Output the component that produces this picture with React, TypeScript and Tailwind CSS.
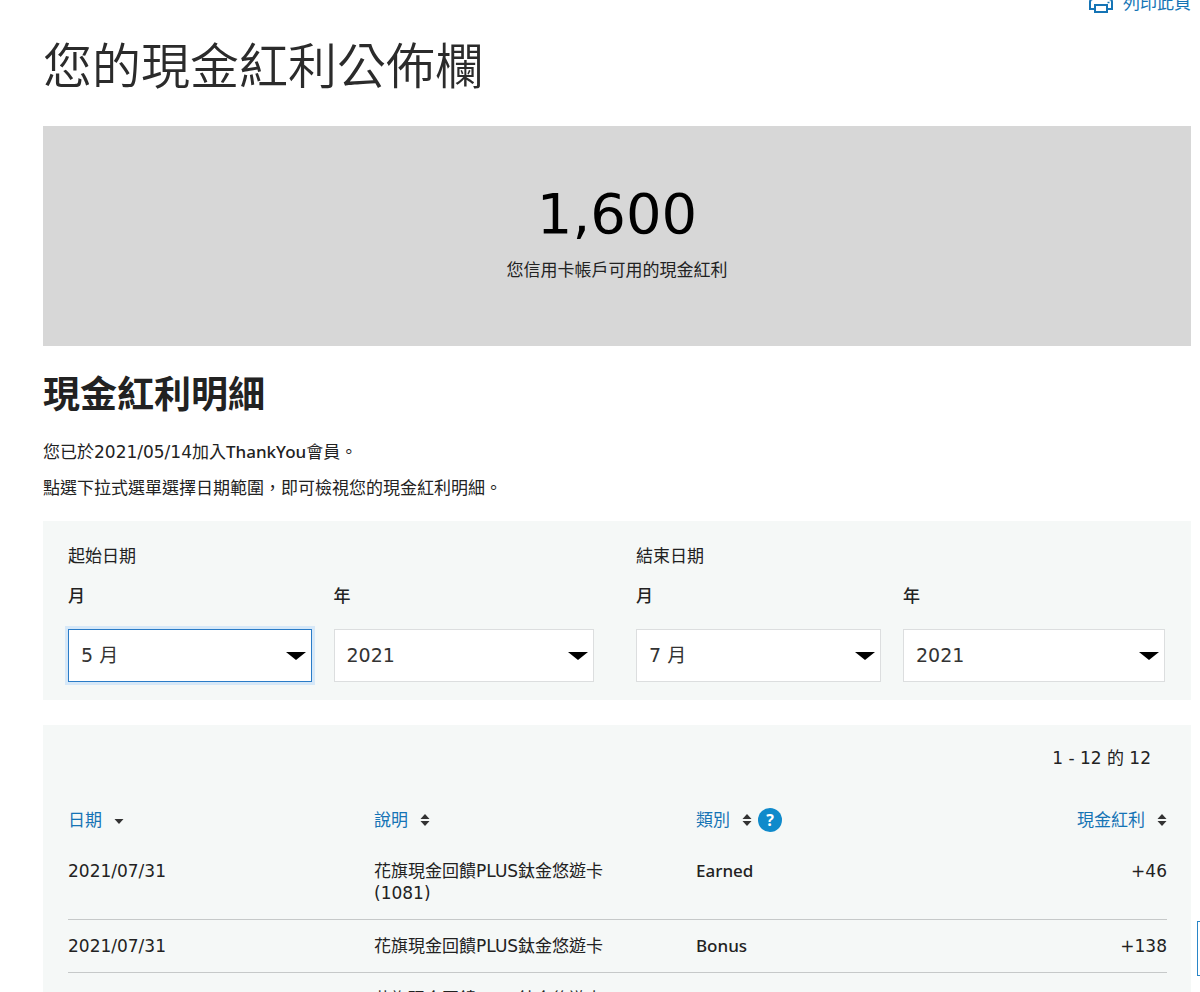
import { ReactNode } from "react";
import clsx from "clsx";

const months = ["1 月", "2 月", "3 月", "4 月", "5 月", "6 月", "7 月", "8 月", "9 月", "10 月", "11 月", "12 月"];
const years = ["2020", "2021"];

const rows = [
  { date: "2021/07/31", name: "花旗現金回饋PLUS鈦金悠遊卡", card: "(1081)", type: "Earned", amount: "+46" },
  { date: "2021/07/31", name: "花旗現金回饋PLUS鈦金悠遊卡", card: "", type: "Bonus", amount: "+138" },
  { date: "2021/07/31", name: "花旗現金回饋PLUS鈦金悠遊卡", card: "", type: "Earned", amount: "+54" },
];

const digits = "font-['DejaVu_Sans','Noto_Sans_CJK_TC',sans-serif]";

const PrintIcon = () => (
  <svg className="h-6 w-6" viewBox="0 0 24 24" fill="none" stroke="currentColor" strokeWidth="2" aria-hidden="true">
    <path d="M6 8V2h12v6" />
    <path d="M6 18H1V11a3 3 0 0 1 3-3h16a3 3 0 0 1 3 3v7h-5" />
    <path d="M6 14h12v7H6z" />
    <path d="M18.500 11.500h2" strokeWidth="1.500" />
  </svg>
);

const SortIcon = ({ down = false }: { down?: boolean }) => (
  <svg className="h-4 w-2.5" viewBox="0 0 10 16" fill="#333" aria-hidden="true">
    {down ? (
      <path d="M.500 7h9L5 12z" />
    ) : (
      <>
        <path d="M5 2 9.500 7h-9z" />
        <path d="M.500 9h9L5 14z" />
      </>
    )}
  </svg>
);

const SortButton = ({ children, down }: { children: ReactNode; down?: boolean }) => (
  <button type="button" className="inline-flex items-center gap-3 text-[#1574b5]">
    {children}
    <SortIcon down={down} />
  </button>
);

const DateSelect = (props: { id: string; label: string; options: string[]; value: string; active?: boolean }) => (
  <div className="flex flex-col">
    <label htmlFor={props.id} className="mb-[21px] font-medium text-[#222]">
      {props.label}
    </label>
    <div className="relative">
      <select
        id={props.id}
        defaultValue={props.value}
        className={clsx(
          "block h-[53px] w-full appearance-none border bg-white px-3 pb-px text-[19px] text-[#333] outline-none",
          digits,
          props.active ? "border-[#2a7cc7] ring-3 ring-[#d6e8f8]" : "border-[#dcdedf]"
        )}
      >
        {props.options.map((o) => (
          <option key={o}>{o}</option>
        ))}
      </select>
      <svg
        className="pointer-events-none absolute top-[23px] right-1.5 h-2 w-5"
        viewBox="0 0 20 8"
        aria-hidden="true"
      >
        <path d="M0 0h20l-10 8z" />
      </svg>
    </div>
  </div>
);

export default function App() {
  return (
    <div className="relative h-screen overflow-hidden bg-white pr-[9px] pl-[43px] font-['Noto_Sans','Noto_Sans_CJK_TC',sans-serif] text-[17px] leading-6 text-[#222]">
      <div className="-mt-[9px] flex justify-end">
        <a href="#print" className="flex items-center gap-2.5 text-[#1574b5]">
          <PrintIcon />
          列印此頁
        </a>
      </div>

      <h1 className="mt-[18px] font-['Noto_Sans_CJK_TC_DemiLight','Noto_Sans_CJK_TC',sans-serif] text-[49px] leading-[60px] font-[350] text-[#2b2b2b]">
        您的現金紅利公佈欄
      </h1>

      {/* Balance */}
      <section className="mt-[33px] bg-[#d7d7d7] pt-14 pb-16 text-center">
        <p className={clsx("text-[56px] leading-[64px] text-black", digits)}>1,600</p>
        <p className="mt-3">您信用卡帳戶可用的現金紅利</p>
      </section>

      <h2 className="mt-6 text-[37px] leading-[48px] font-bold">現金紅利明細</h2>
      <p className="mt-[22px]">
        您已於<span className={digits}>2021/05/14</span>加入<span className="font-medium">ThankYou</span>會員。
      </p>
      <p className="mt-3">點選下拉式選單選擇日期範圍，即可檢視您的現金紅利明細。</p>

      {/* Date range */}
      <form className="mt-[21px] grid grid-cols-[526fr_529fr] gap-[42px] bg-[#f5f8f7] pt-[23px] pr-[26px] pb-[18px] pl-[25px]">
        <fieldset>
          <legend className="mb-4">起始日期</legend>
          <div className="grid grid-cols-[244fr_261fr] gap-[22px]">
            <DateSelect id="start-month" label="月" options={months} value="5 月" active />
            <DateSelect id="start-year" label="年" options={years} value="2021" />
          </div>
        </fieldset>
        <fieldset>
          <legend className="mb-4">結束日期</legend>
          <div className="grid grid-cols-[244fr_261fr] gap-[22px]">
            <DateSelect id="end-month" label="月" options={months} value="7 月" />
            <DateSelect id="end-year" label="年" options={years} value="2021" />
          </div>
        </fieldset>
      </form>

      {/* Transactions */}
      <section className="mt-[25px] bg-[#f5f8f7] pt-[21px] pr-6 pl-[25px]">
        <p className={clsx("pr-4 text-right", digits)}>1 - 12 的 12</p>
        <table className="mt-[38px] w-full table-fixed text-left">
          <thead>
            <tr className="[&>th]:p-0 [&>th]:pb-[13px] [&>th]:font-normal">
              <th className="w-[306px]">
                <SortButton down>日期</SortButton>
              </th>
              <th className="w-[322px]">
                <SortButton>說明</SortButton>
              </th>
              <th className="w-[24%]">
                <div className="flex items-center gap-1.5">
                  <SortButton>類別</SortButton>
                  <button
                    type="button"
                    aria-label="類別說明"
                    className="h-6 w-6 rounded-full bg-[#0f8acb] text-center text-base leading-6 font-bold text-white"
                  >
                    ?
                  </button>
                </div>
              </th>
              <th className="text-right">
                <SortButton>現金紅利</SortButton>
              </th>
            </tr>
          </thead>
          <tbody>
            {rows.map((row, i) => (
              <tr
                key={i}
                className="border-b border-[#c6c9c9] align-top leading-[22px] [&>td]:px-0 [&>td]:py-[15px]"
              >
                <td className={digits}>{row.date}</td>
                <td className={digits}>
                  {row.name}
                  {row.card && <div>{row.card}</div>}
                </td>
                <td className="font-medium">{row.type}</td>
                <td className={clsx("text-right", digits)}>{row.amount}</td>
              </tr>
            ))}
          </tbody>
        </table>
      </section>

      {/* Side tab */}
      <button
        type="button"
        aria-label="意見"
        className="absolute right-0 bottom-4 h-[55px] w-[3px] border border-r-0 border-solid border-[#2a86c8] bg-white"
      />
    </div>
  );
}
